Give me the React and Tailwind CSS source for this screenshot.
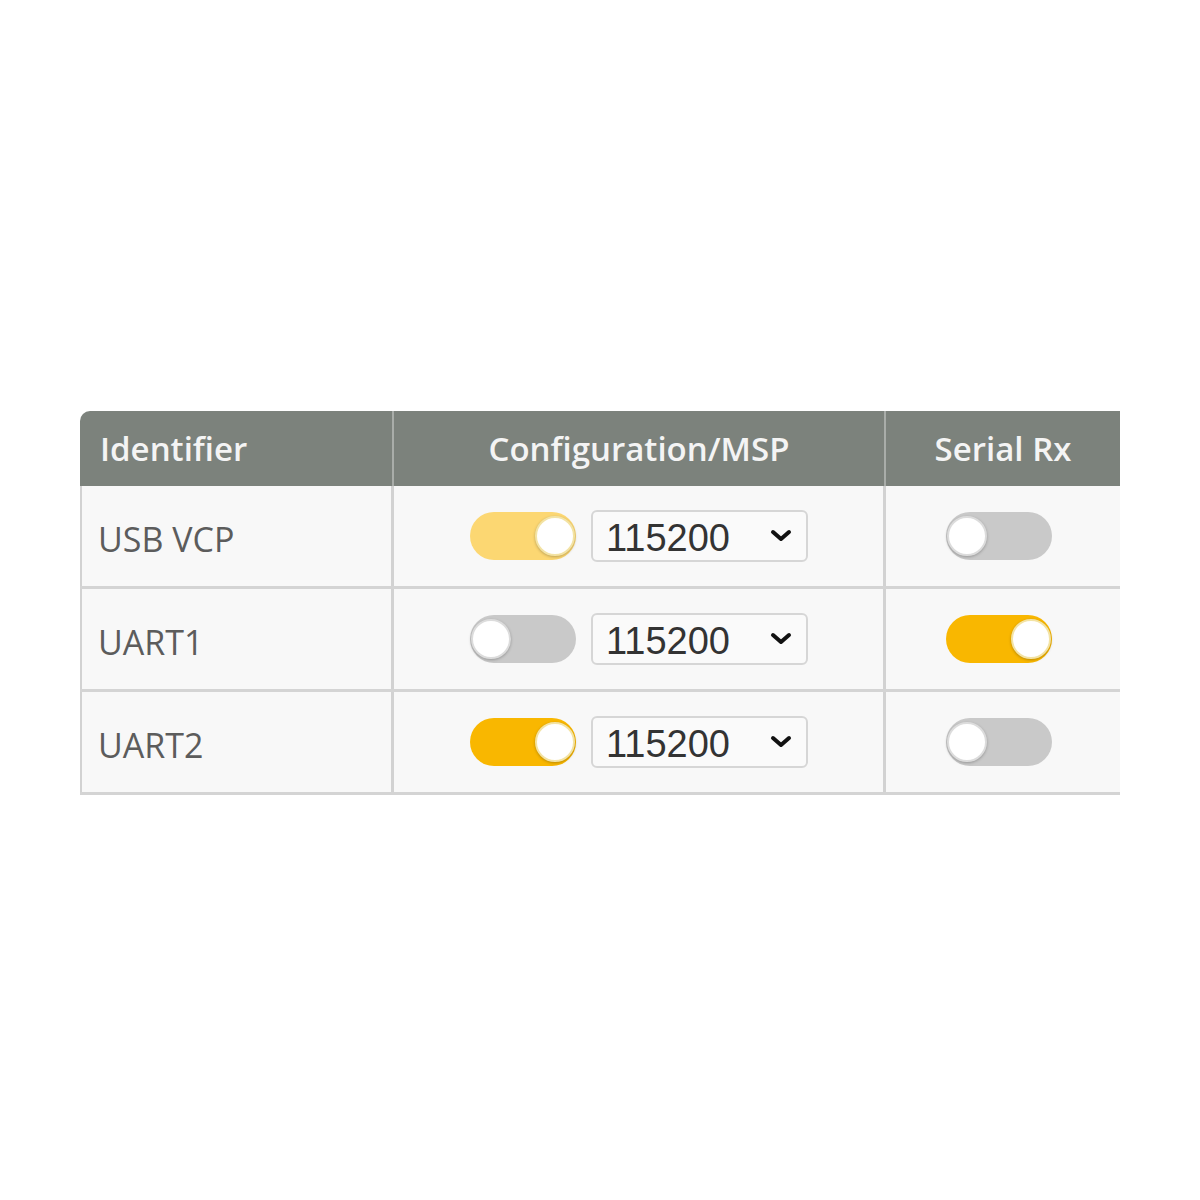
import React from "react";

function Toggle({ on, pale }) {
  const track = on ? (pale ? "bg-[#fcd772]" : "bg-[#f9b700]") : "bg-[#c9c9c9]";
  return (
    <div className={`relative w-[106px] h-[48px] rounded-full ${track} shrink-0`}>
      <div
        className={`absolute top-[4px] w-[40px] h-[40px] rounded-full bg-white ${
          on ? "right-[1px] border-2 border-[#f3e3a4]" : "left-[1px] border-2 border-[#dcdcdc]"
        } shadow-[0_1px_3px_rgba(0,0,0,0.25)]`}
      />
    </div>
  );
}

function Select() {
  return (
    <div className="w-[217px] h-[52px] rounded-[6px] border-2 border-[#d6d6d6] bg-[#fafafa] flex items-center justify-between pl-[13px] pr-[14px]">
      <span className="text-[38px] leading-none text-[#333] font-['Liberation_Sans',Arial,sans-serif] pt-[4px]">115200</span>
      <svg width="22" height="14" viewBox="0 0 22 14" fill="none">
        <path d="M3 3 L11 10 L19 3" stroke="#111" strokeWidth="4" strokeLinecap="round" strokeLinejoin="round" />
      </svg>
    </div>
  );
}

const rows = [
  { id: "USB VCP", msp: true, pale: true, rx: false },
  { id: "UART1", msp: false, rx: true },
  { id: "UART2", msp: true, rx: false },
];

export default function App() {
  return (
    <div className="w-[1200px] h-[1200px] bg-white font-['Open_Sans',sans-serif] pt-[411px] pl-[80px]">
      <div className="w-[1040px]">
        <div className="grid grid-cols-[314px_492px_234px] h-[75px] bg-[#7c827c] rounded-tl-[10px] text-[#f4f4f4] text-[33px] font-semibold">
          <div className="flex items-center pl-[20px] border-r-2 border-[#a9ada9]">Identifier</div>
          <div className="flex items-center justify-center border-r-2 border-[#a9ada9]">Configuration/MSP</div>
          <div className="flex items-center justify-center">Serial Rx</div>
        </div>
        {rows.map((r) => (
          <div
            key={r.id}
            className="grid grid-cols-[314px_492px_234px] h-[103px] bg-[#f8f8f8] border-b-[3px] border-[#d4d4d4]"
          >
            <div className="flex items-center pl-[16px] pt-[6px] border-l-2 border-r-[3px] border-[#d2d2d2] text-[34px] text-[#5c5c5c]">
              {r.id}
            </div>
            <div className="flex items-center pl-[76px] gap-[15px] border-r-[3px] border-[#d2d2d2]">
              <Toggle on={r.msp} pale={r.pale} />
              <Select />
            </div>
            <div className="flex items-center pl-[60px]">
              <Toggle on={r.rx} />
            </div>
          </div>
        ))}
      </div>
    </div>
  );
}
